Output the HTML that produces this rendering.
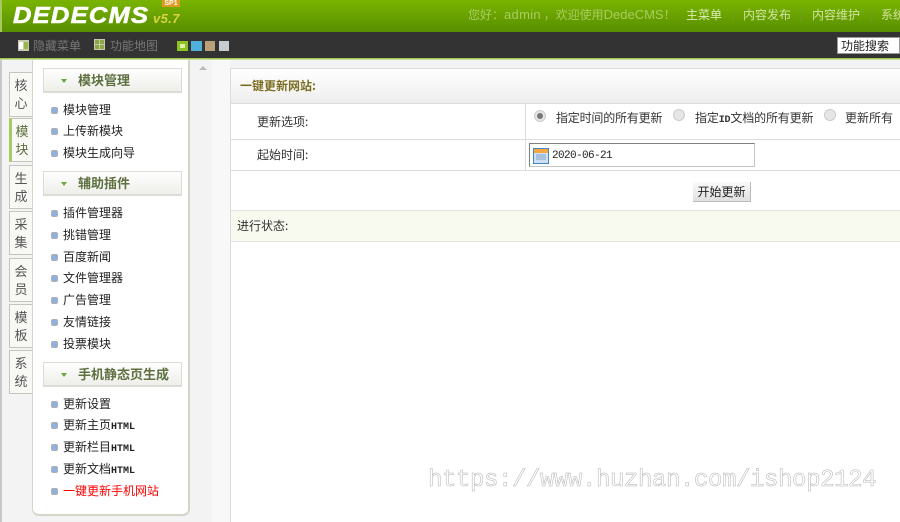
<!DOCTYPE html>
<html lang="zh"><head><meta charset="utf-8"><title>DedeCMS</title>
<style>
html,body{margin:0;padding:0}
body{width:900px;height:522px;overflow:hidden;position:relative;background:#f3f3f3;font:12px/14px "WenQuanYi Zen Hei","Noto Sans CJK SC",sans-serif;color:#333}
.a{position:absolute;white-space:nowrap}
.tab{position:absolute;left:9px;width:23px;box-sizing:border-box;background:#f8f8f5;border:1px solid #c5c5c0;border-right:0;font-size:13px;line-height:18px;text-align:center;color:#555;padding-top:3px}
.h{position:absolute;left:43px;width:139px;height:25px;box-sizing:border-box;border:1px solid #dcdcd6;border-bottom:2px solid #dcdcd6;background:linear-gradient(#fff,#eeeeea);color:#5f7040;font-size:13px;font-weight:bold;line-height:22px;padding-left:34px}
.h:before{content:"";position:absolute;left:17px;top:10px;border:3px solid transparent;border-top:4px solid #6aa63a;border-bottom:0}
.m{position:absolute;left:63px;color:#222;line-height:14px;white-space:nowrap}
.m:before{content:"";position:absolute;left:-12px;top:4px;width:7px;height:7px;box-sizing:border-box;border-radius:2px;background:#8fb0e0;border:1px solid #b0b0b0}
.m i{font:normal bold 10px/14px "Liberation Mono",monospace}
.l{position:absolute;left:230px;right:0;height:1px;background:#dcdcdc}
.r{position:absolute;width:10px;height:10px;border-radius:50%;background:#e6e6e6;border:1px solid #ccc}
</style></head><body>

<div class="a" style="left:0;top:59px;width:2px;height:463px;background:#c8c8c8"></div>
<div class="a" style="left:0;top:0;width:900px;height:32px;background:linear-gradient(#7ab400,#578f00)"></div>
<div class="a" style="left:0;top:0;width:2px;height:32px;background:#a8c860"></div>
<div class="a" style="left:13px;top:3px;font:italic bold 23px/24px 'Liberation Sans',sans-serif;color:#fff;letter-spacing:1.1px;-webkit-text-stroke:.6px #fff;transform:scaleX(1.11);transform-origin:0 0">DEDECMS</div>
<div class="a" style="left:153px;top:11px;font:italic bold 13px/16px 'Liberation Sans',sans-serif;color:#d8d24a;letter-spacing:.4px">v5.7</div>
<div class="a" style="left:162px;top:0;width:18px;height:7px;background:#e09a20;font:bold 7px/7px 'Liberation Sans',sans-serif;color:#fff;text-align:center">SP1</div>
<div class="a" style="left:468px;top:8px;color:#a9cc60;font-size:12px">您好：<span style="font:13px/14px 'Liberation Sans',sans-serif;letter-spacing:.3px">admin</span> ，欢迎使用<span style="font:13px/14px 'Liberation Sans',sans-serif">DedeCMS</span>！</div>
<div class="a" style="left:686px;top:8px;color:#dcebb8">主菜单</div>
<div class="a" style="left:743px;top:8px;color:#cfe3a0">内容发布</div>
<div class="a" style="left:812px;top:8px;color:#cfe3a0">内容维护</div>
<div class="a" style="left:881px;top:8px;color:#cfe3a0">系统</div>
<div class="a" style="left:732px;top:9px;width:1px;height:13px;background:#6f9f20"></div>
<div class="a" style="left:801px;top:9px;width:1px;height:13px;background:#6f9f20"></div>
<div class="a" style="left:870px;top:9px;width:1px;height:13px;background:#6f9f20"></div>

<div class="a" style="left:0;top:32px;width:900px;height:26px;background:#333"></div>
<div class="a" style="left:0;top:58px;width:900px;height:2px;background:linear-gradient(#8ab820,#dfe8c8)"></div>
<svg class="a" style="left:18px;top:40px" width="11" height="11"><rect width="11" height="11" fill="#c9c9b0"/><rect x="1" y="2" width="4" height="7" fill="#fff"/><rect x="6" y="2" width="4" height="7" fill="#9ab84a"/></svg>
<div class="a" style="left:33px;top:39px;color:#777">隐藏菜单</div>
<svg class="a" style="left:94px;top:39px" width="11" height="11"><rect width="11" height="11" fill="#c9c9b0"/><rect x="1" y="1" width="4" height="4" fill="#8aa840"/><rect x="6" y="1" width="4" height="4" fill="#8aa840"/><rect x="1" y="6" width="4" height="4" fill="#8aa840"/><rect x="6" y="6" width="4" height="4" fill="#8aa840"/></svg>
<div class="a" style="left:110px;top:39px;color:#777">功能地图</div>
<div class="a" style="left:177px;top:41px;width:11px;height:10px;background:#8fc31f"></div>
<div class="a" style="left:180px;top:44px;width:5px;height:4px;background:#e0eeb0"></div>
<div class="a" style="left:191px;top:41px;width:11px;height:10px;background:#4fb0dc"></div>
<div class="a" style="left:205px;top:41px;width:10px;height:10px;background:#b8a078"></div>
<div class="a" style="left:219px;top:41px;width:10px;height:10px;background:#c4ccd0"></div>
<div class="a" style="left:837px;top:37px;width:63px;height:17px;background:#fff;border:1px solid #999;box-sizing:border-box;color:#222;line-height:16px;padding-left:3px">功能搜索</div>

<div class="tab" style="top:72px;height:45px">核<br>心</div>
<div class="tab" style="top:118px;height:44px;border-left:3px solid #a8c860;color:#5c6e3c">模<br>块</div>
<div class="tab" style="top:165px;height:44px">生<br>成</div>
<div class="tab" style="top:211px;height:44px">采<br>集</div>
<div class="tab" style="top:258px;height:44px">会<br>员</div>
<div class="tab" style="top:304px;height:44px">模<br>板</div>
<div class="tab" style="top:350px;height:44px">系<br>统</div>

<div class="a" style="left:32px;top:60px;width:158px;height:456px;box-sizing:border-box;background:#fff;border:solid #d4d4c8;border-width:0 2px 2px 1px;border-radius:0 0 7px 7px"></div>
<div class="a" style="left:199px;top:66px;border:4px solid transparent;border-bottom:4px solid #bbb;border-top:0"></div>
<div class="a" style="left:212px;top:60px;width:18px;height:462px;background:#f8f8f8"></div>

<div class="h" style="top:68px">模块管理</div>
<div class="m" style="top:103px">模块管理</div>
<div class="m" style="top:124px">上传新模块</div>
<div class="m" style="top:146px">模块生成向导</div>
<div class="h" style="top:171px">辅助插件</div>
<div class="m" style="top:206px">插件管理器</div>
<div class="m" style="top:228px">挑错管理</div>
<div class="m" style="top:250px">百度新闻</div>
<div class="m" style="top:271px">文件管理器</div>
<div class="m" style="top:293px">广告管理</div>
<div class="m" style="top:315px">友情链接</div>
<div class="m" style="top:337px">投票模块</div>
<div class="h" style="top:362px">手机静态页生成</div>
<div class="m" style="top:397px">更新设置</div>
<div class="m" style="top:418px">更新主页<i>HTML</i></div>
<div class="m" style="top:440px">更新栏目<i>HTML</i></div>
<div class="m" style="top:462px">更新文档<i>HTML</i></div>
<div class="m" style="top:484px;color:#f00">一键更新手机网站</div>

<div class="a" style="left:230px;top:68px;width:670px;height:454px;background:#fff;border-left:1px solid #dcdcdc;border-top:1px solid #dcdcdc;box-sizing:border-box"></div>
<div class="a" style="left:231px;top:69px;width:669px;height:34px;background:linear-gradient(#fff,#eeeeee)"></div>
<div class="a" style="left:240px;top:79px;color:#7a6d20;font-weight:bold">一键更新网站:</div>
<div class="l" style="top:103px"></div>
<div class="l" style="top:139px"></div>
<div class="l" style="top:170px"></div>
<div class="a" style="left:525px;top:103px;width:1px;height:67px;background:#dcdcdc"></div>
<div class="a" style="left:257px;top:115px;color:#333">更新选项:</div>
<div class="a" style="left:257px;top:148px;color:#333">起始时间:</div>
<div class="r" style="left:534px;top:110px"></div>
<div class="a" style="left:537px;top:113px;width:6px;height:6px;border-radius:50%;background:#777"></div>
<div class="a" style="left:556px;top:111px;color:#333;letter-spacing:-.2px">指定时间的所有更新</div>
<div class="r" style="left:673px;top:109px"></div>
<div class="a" style="left:695px;top:111px;color:#333;letter-spacing:-.15px">指定<span style="font:bold 10px/14px 'Liberation Mono',monospace">ID</span>文档的所有更新</div>
<div class="r" style="left:824px;top:109px"></div>
<div class="a" style="left:845px;top:111px;color:#333">更新所有</div>
<div class="a" style="left:529px;top:143px;width:226px;height:24px;box-sizing:border-box;background:#fff;border:1px solid #c4c4c4;border-top-color:#808080;border-left-color:#808080"></div>
<svg class="a" style="left:533px;top:148px" width="16" height="16"><rect width="16" height="16" fill="#3f86c4"/><rect x="1" y="1" width="14" height="4" fill="#f5a840"/><rect x="1" y="5" width="14" height="10" fill="#cfe0f2"/><path d="M3 7h10M3 9h10M3 11h10" stroke="#7fa3cc" stroke-width="1"/></svg>
<div class="a" style="left:552px;top:149px;color:#222;font:11px/14px 'Liberation Mono',monospace;letter-spacing:-.6px">2020-06-21</div>
<div class="a" style="left:693px;top:182px;width:58px;height:20px;box-sizing:border-box;background:linear-gradient(#fafafa,#e0e0e0);border-right:1px solid #bbb;border-bottom:1px solid #bbb;text-align:center;line-height:19px;color:#222">开始更新</div>
<div class="a" style="left:231px;top:210px;width:669px;height:32px;box-sizing:border-box;background:#f9faef;border-top:1px solid #e2e2e2;border-bottom:1px solid #e2e2e2"></div>
<div class="a" style="left:237px;top:219px;color:#333">进行状态:</div>

<div class="a" style="left:428px;top:467px;font:24px/28px 'Liberation Mono',monospace;letter-spacing:-.4px;color:#fff;-webkit-text-stroke:.5px #b0b0b0">https://www.huzhan.com/ishop2124</div>
</body></html>
